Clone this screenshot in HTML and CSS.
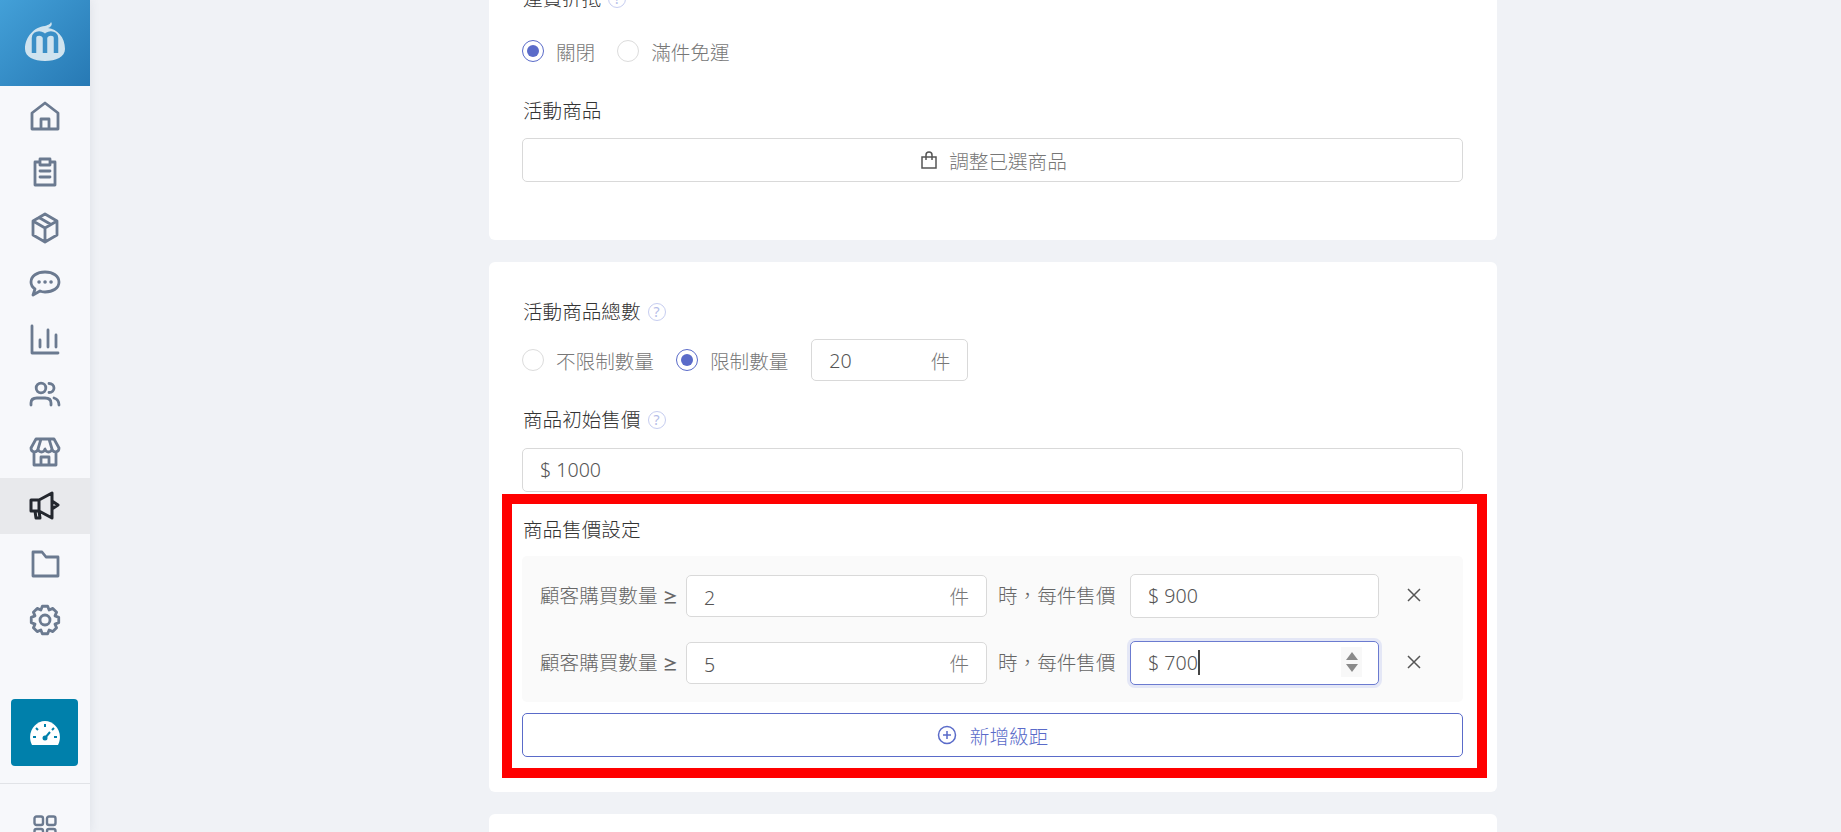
FILE: index.html
```html
<!DOCTYPE html>
<html lang="zh-Hant">
<head>
    <meta charset="UTF-8">
    <title>活動設定</title>
    <link rel="stylesheet" href="styles.css">
</head>
<body>
    <!-- 側邊選單 -->
    <aside class="sidebar">
        <a class="logo" href="#">
            <svg width="44" height="44" viewBox="0 0 44 44">
                <path d="M22 5c2-1 5-1 6-4 1 1 1 3 0 4-1 1-2 2-3 2 9 1 17 9 17 21 0 8-9 12-20 12S2 36 2 28C2 16 11 6 22 5z" fill="#cfe3ef"/>
                <path d="M11 32V17c0-6 10-6 11 0v15M22 17c1-6 11-6 11 0v15" fill="none" stroke="#3a8fc7" stroke-width="4.500"/>
            </svg>
        </a>
        <nav class="side-nav">
            <a class="side-item" href="#">
                <svg viewBox="0 0 32 32"><path d="M3 13L16 3l13 10v16H3zM12 29V19h8v10"/></svg>
            </a>
            <a class="side-item" href="#">
                <svg viewBox="0 0 32 32"><path d="M11 6H6v23h20V6h-5M11 3h10v6H11zM11 15h10M11 21h10"/></svg>
            </a>
            <a class="side-item" href="#">
                <svg viewBox="0 0 32 32"><path d="M16 2l12 7v14l-12 7-12-7V9zM4 9l12 7 12-7M16 16v14M10 5.500l12 7"/></svg>
            </a>
            <a class="side-item" href="#">
                <svg viewBox="0 0 32 32"><path d="M16 4c8 0 14 4 14 10s-6 10-14 10c-2 0-3 0-5-1l-7 4 2-6c-3-2-4-4-4-7C2 8 8 4 16 4z"/><path class="dots" d="M10 14h.1M16 14h.1M22 14h.1"/></svg>
            </a>
            <a class="side-item" href="#">
                <svg viewBox="0 0 32 32"><path d="M3 2v27h26M11 23v-7M19 23V6M27 23V11"/></svg>
            </a>
            <a class="side-item" href="#">
                <svg viewBox="0 0 32 32"><circle cx="12" cy="8" r="4.800"/><path d="M2 25v-2c0-4 3-5 6-5h8c3 0 6 1 6 5v2M20 3.500c3 0 5 2 5 4.500s-2 4.500-5 4.500M25 18c3 1 5 3 5 7"/></svg>
            </a>
            <a class="side-item" href="#">
                <svg viewBox="0 0 32 32"><path d="M7 3h18l5 9c0 5-6 5-7 1-1 4-6 4-7 0-1 4-6 4-7 0-1 4-7 4-7-1zM12 3l-3 10M20 3l3 10M5 17v12h22V17M12 29v-8h8v8"/></svg>
            </a>
            <a class="side-item side-item-active" href="#">
                <svg viewBox="0 0 32 32"><path d="M2 10h8v11H2zM10 10l13-7v25l-13-7zM23 11l6 4-6 4M6 21l1 7h4l-1-7"/></svg>
            </a>
            <a class="side-item" href="#">
                <svg viewBox="0 0 32 32"><path d="M4 4h9l4 5h12v19H4z"/></svg>
            </a>
            <a class="side-item" href="#">
                <svg viewBox="0 0 32 32"><circle cx="16" cy="16" r="5"/><path d="M13.330 2.260L18.670 2.260L20.130 6.020L23.830 4.390L27.610 8.170L25.980 11.870L29.740 13.330V18.670L25.980 20.130L27.610 23.830L23.830 27.610L20.130 25.980L18.670 29.740H13.330L11.870 25.980L8.170 27.610L4.390 23.830L6.020 20.130L2.260 18.670V13.330L6.020 11.870L4.390 8.170L8.170 4.390L11.870 6.020Z"/></svg>
            </a>
        </nav>
        <a class="gauge-btn" href="#">
            <svg width="32" height="28" viewBox="0 0 32 28">
                <path d="M3 26C-3 14 6 2 16 2s19 12 13 24z" fill="#fff"/>
                <path d="M16 5v3M7 9l2 2M25 9l-2 2M4 18h3M25 18h3M16 19l5-6" fill="none" stroke="#0080ab" stroke-width="2"/>
                <circle cx="16" cy="19" r="2.500" fill="#0080ab"/>
            </svg>
        </a>
        <div class="side-bottom">
            <svg class="grid-icon" viewBox="0 0 24 24"><rect x="1.500" y="1.500" width="8.500" height="8.500" rx="2"/><rect x="14" y="1.500" width="8.500" height="8.500" rx="2"/><rect x="1.500" y="14" width="8.500" height="8.500" rx="2"/><rect x="14" y="14" width="8.500" height="8.500" rx="2"/></svg>
        </div>
    </aside>

    <main class="content">
        <section class="card card-first">
            <div class="field-label">運費折抵 <span class="help">?</span></div>
            <div class="radio-row radio-row-first">
                <span class="radio radio-on"></span><span class="radio-text">關閉</span>
                <span class="radio"></span><span class="radio-text">滿件免運</span>
            </div>
            <div class="field-label label-products">活動商品</div>
            <button class="wide-btn btn-products">
                <svg class="bag-icon" viewBox="0 0 16 18"><path d="M1 6h14v11H1zM5 9V4c0-4 6-4 6 0v5"/></svg>
                調整已選商品
            </button>
        </section>

        <section class="card card-second">
            <div class="field-label">活動商品總數 <span class="help">?</span></div>
            <div class="radio-row radio-row-limit">
                <span class="radio"></span><span class="radio-text">不限制數量</span>
                <span class="radio radio-on"></span><span class="radio-text">限制數量</span>
                <div class="input input-short"><span>20</span><span class="unit">件</span></div>
            </div>
            <div class="field-label label-start">商品初始售價 <span class="help">?</span></div>
            <div class="input input-full"><span>$ 1000</span></div>

            <!-- 紅框標示區 -->
            <div class="mark-box">
                <div class="field-label">商品售價設定</div>
                <div class="tier-panel">
                    <div class="tier-row">
                        <span class="tier-text">顧客購買數量 <b class="gte">≥</b></span>
                        <div class="input input-qty"><span class="qty-num">2</span><span class="unit">件</span></div>
                        <span class="tier-text tier-mid">時&#xFF0C;每件售價</span>
                        <div class="input input-price"><span>$ 900</span></div>
                        <span class="tier-del">
                            <svg viewBox="0 0 14 14"><path d="M1 1l12 12M13 1L1 13"/></svg>
                        </span>
                    </div>
                    <div class="tier-row">
                        <span class="tier-text">顧客購買數量 <b class="gte">≥</b></span>
                        <div class="input input-qty"><span class="qty-num">5</span><span class="unit">件</span></div>
                        <span class="tier-text tier-mid">時&#xFF0C;每件售價</span>
                        <div class="input input-price input-focus">
                            <span>$ 700</span><i class="caret"></i>
                            <span class="spinner"><i class="spin-up"></i><i class="spin-down"></i></span>
                        </div>
                        <span class="tier-del">
                            <svg viewBox="0 0 14 14"><path d="M1 1l12 12M13 1L1 13"/></svg>
                        </span>
                    </div>
                </div>
                <button class="wide-btn add-btn">
                    <svg class="plus-icon" viewBox="0 0 20 20"><circle cx="10" cy="10" r="8.500"/><path d="M10 6v8M6 10h8"/></svg>
                    新增級距
                </button>
            </div>
        </section>

        <section class="card card-third"></section>
    </main>
</body>
</html>
```

FILE: styles.css
```css
html, body {
    height: 100%;
}

body {
    margin: 0;
    display: flex;
    height: 832px;
    overflow: hidden;
    background-color: #f0f2f6;
    color: #333;
    font-family: "Noto Sans", "Noto Sans CJK TC", sans-serif;
    font-weight: 300;
    font-size: 19.6px;
}

/* 側邊選單 */
.sidebar {
    width: 90px;
    flex-shrink: 0;
    background-color: #f7f8fb;
    box-shadow: 0 0 10px rgba(60, 70, 100, 0.1);
    display: flex;
    flex-direction: column;
    z-index: 2;
}

.logo {
    height: 86px;
    flex-shrink: 0;
    display: flex;
    align-items: center;
    justify-content: center;
    background: linear-gradient(135deg, #43a0d8 0%, #2779b4 100%);
}

.side-nav {
    flex-shrink: 0;
}

.side-item {
    height: 56px;
    display: flex;
    align-items: center;
    justify-content: center;
}

.side-item svg {
    width: 32px;
    height: 32px;
    fill: none;
    stroke: #6b7a90;
    stroke-width: 2.800;
    stroke-linejoin: round;
    stroke-linecap: round;
    margin-top: 3px;
}

.side-item svg .dots {
    stroke-width: 3.500;
}

.side-item-active {
    background-color: #e8e9ec;
}

.side-item-active svg {
    stroke: #23272e;
    stroke-width: 3;
    margin-top: 0;
}

.gauge-btn {
    width: 67px;
    height: 67px;
    flex-shrink: 0;
    margin: 53px 0 0 11px;
    display: flex;
    align-items: center;
    justify-content: center;
    background-color: #0080ab;
    border-radius: 4px;
}

.side-bottom {
    margin-top: 17px;
    padding-top: 31px;
    border-top: 1px solid #e1e3e7;
    text-align: center;
}

.grid-icon {
    width: 24px;
    height: 24px;
    fill: none;
    stroke: #6b7a90;
    stroke-width: 2.400;
}

/* 主要內容 */
.content {
    padding-left: 399px;
    width: 1008px;
    margin-top: -51px;
}

.card {
    background-color: #fff;
    border-radius: 6px;
    padding: 36px 34px 0 33px;
    margin-bottom: 22px;
}

.card-first {
    padding-bottom: 58px;
}

.card-second {
    padding-bottom: 14px;
}

.card-third {
    height: 120px;
}

.field-label {
    line-height: 28px;
    color: #333;
    display: flex;
    align-items: center;
    gap: 7px;
    padding-left: 1px;
}

.help {
    width: 16px;
    height: 16px;
    border: 1.5px solid #c6cdf0;
    border-radius: 50%;
    color: #b4bde8;
    font-size: 14px;
    line-height: 16px;
    text-align: center;
    font-weight: 400;
}

.radio-row {
    display: flex;
    align-items: center;
    color: #777;
}

.radio-row-first {
    height: 24px;
    margin-top: 26px;
}

.radio-row-limit {
    margin-top: 13px;
}

.radio {
    width: 22px;
    height: 22px;
    box-sizing: border-box;
    border: 1px solid #dcdcdc;
    border-radius: 50%;
    background-color: #fff;
    display: flex;
    align-items: center;
    justify-content: center;
    margin-right: 12px;
}

.radio-on {
    border-color: #5a6bc9;
}

.radio-on::after {
    content: "";
    width: 12px;
    height: 12px;
    border-radius: 50%;
    background-color: #5a6bc9;
}

.radio-text {
    margin-right: 22px;
}

.label-products {
    margin-top: 34px;
}

.label-start {
    margin-top: 25px;
}

.wide-btn {
    display: flex;
    align-items: center;
    justify-content: center;
    gap: 13px;
    width: 100%;
    height: 44px;
    margin-top: 13px;
    background-color: #fff;
    border: 1px solid #d9d9d9;
    border-radius: 5px;
    color: #777;
    font-family: inherit;
    font-weight: 300;
    font-size: 19.6px;
}

.btn-products {
    gap: 12px;
    padding-left: 9px;
}

.bag-icon {
    width: 16px;
    height: 18px;
    fill: none;
    stroke: #555;
    stroke-width: 1.500;
}

.input {
    box-sizing: border-box;
    height: 42px;
    display: flex;
    align-items: center;
    justify-content: space-between;
    background-color: #fff;
    border: 1px solid #d9d9d9;
    border-radius: 5px;
    color: #555;
    padding: 0 17px;
}

.input-short {
    width: 157px;
    margin-left: 1px;
}

.input-full {
    height: 44px;
    margin-top: 14px;
    padding-bottom: 2px;
}

.unit {
    color: #777;
}

/* 紅框 */
.mark-box {
    border: 10px solid #f00;
    margin: 2px -24px 0 -20px;
    padding: 12px 14px 11px 10px;
}

.tier-panel {
    background-color: #fafafa;
    border-radius: 5px;
    margin-top: 12px;
    padding: 18px 0 17px 18px;
    display: flex;
    flex-direction: column;
    gap: 23px;
}

.tier-row {
    display: flex;
    align-items: center;
    height: 44px;
}

.tier-text {
    color: #666;
    width: 146px;
    white-space: nowrap;
    padding-bottom: 3px;
}

.gte {
    font-size: 15px;
    font-weight: 600;
}

.tier-mid {
    width: 132px;
    margin-left: 11px;
}

.input-qty {
    width: 301px;
}

.input-qty .unit {
    padding-bottom: 2px;
}

.qty-num {
    position: relative;
    top: 1px;
}

.input-price {
    width: 249px;
    height: 44px;
    justify-content: flex-start;
    position: relative;
    padding-bottom: 2px;
}

.input-focus {
    border-color: #6b7bd0;
    box-shadow: 0 0 0 3px #e4e7f6;
}

.caret {
    width: 2px;
    height: 25px;
    background-color: #444;
}

.spinner {
    position: absolute;
    right: 16px;
    top: 5px;
    width: 21px;
    height: 30px;
    background-color: #f8f8f8;
    display: flex;
    flex-direction: column;
    align-items: center;
    justify-content: center;
    gap: 4px;
}

.spin-up {
    border: 6px solid transparent;
    border-top: 0;
    border-bottom: 8px solid #8a8a8a;
}

.spin-down {
    border: 6px solid transparent;
    border-bottom: 0;
    border-top: 8px solid #8a8a8a;
}

.tier-del {
    margin-left: 28px;
    margin-bottom: 2px;
    display: flex;
}

.tier-del svg {
    width: 14px;
    height: 14px;
    fill: none;
    stroke: #555;
    stroke-width: 1.500;
}

.add-btn {
    margin-top: 11px;
    border-color: #5a6bc9;
    color: #5a6bc9;
}

.plus-icon {
    width: 20px;
    height: 20px;
    fill: none;
    stroke: #5a6bc9;
    stroke-width: 1.500;
}
```
